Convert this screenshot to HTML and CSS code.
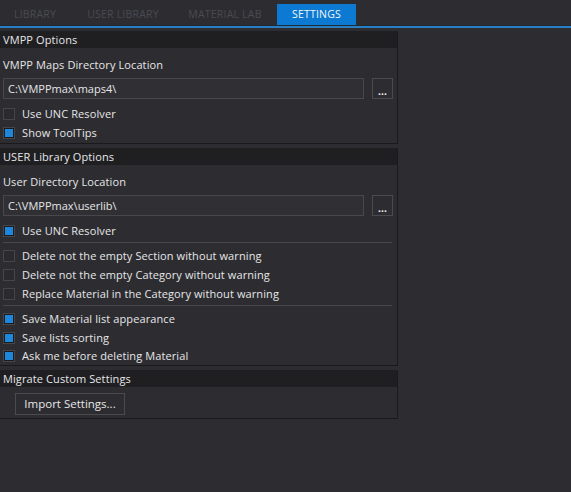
FILE: index.html
```html
<!DOCTYPE html>
<html>
<head>
<meta charset="utf-8">
<link rel="stylesheet" href="styles.css">
</head>
<body>
<div class="tabs">
  <div class="tab t1">LIBRARY</div>
  <div class="tab t2">USER LIBRARY</div>
  <div class="tab t3">MATERIAL LAB</div>
  <div class="tab active">SETTINGS</div>
</div>
<div class="tabline"></div>
<div class="panel">
  <div class="section s1">
    <div class="head">VMPP Options</div>
    <div class="label">VMPP Maps Directory Location</div>
    <div class="pathrow">
      <div class="input">C:\VMPPmax\maps4\</div>
      <div class="browse">...</div>
    </div>
    <div class="checks first">
      <div class="check"><span class="box"></span>Use UNC Resolver</div>
      <div class="check"><span class="box on"></span>Show ToolTips</div>
    </div>
  </div>
  <div class="section s2">
    <div class="head">USER Library Options</div>
    <div class="label">User Directory Location</div>
    <div class="pathrow">
      <div class="input">C:\VMPPmax\userlib\</div>
      <div class="browse">...</div>
    </div>
    <div class="checks first">
      <div class="check"><span class="box on"></span>Use UNC Resolver</div>
    </div>
    <div class="sep"></div>
    <div class="checks">
      <div class="check"><span class="box"></span>Delete not the empty Section without warning</div>
      <div class="check"><span class="box"></span>Delete not the empty Category without warning</div>
      <div class="check"><span class="box"></span>Replace Material in the Category without warning</div>
    </div>
    <div class="sep"></div>
    <div class="checks last">
      <div class="check"><span class="box on"></span>Save Material list appearance</div>
      <div class="check"><span class="box on"></span>Save lists sorting</div>
      <div class="check short"><span class="box on"></span>Ask me before deleting Material</div>
    </div>
  </div>
  <div class="section s3">
    <div class="head">Migrate Custom Settings</div>
    <div class="btnrow"><div class="button">Import Settings...</div></div>
  </div>
</div>
</body>
</html>
```

FILE: styles.css
```css
html, body {
  margin: 0;
  padding: 0;
  background: #2d2d31;
  height: 100%;
}
body {
  font-family: "Open Sans", "Noto Sans", sans-serif;
  font-size: 11px;
  letter-spacing: 0.1px;
  color: #e6e6e8;
}
.tabs {
  display: flex;
  height: 21px;
  padding-top: 4px;
}
.tab {
  font-size: 10.5px;
  line-height: 21px;
  color: #4a4a52;
  text-align: center;
  letter-spacing: 0.2px;
}
.t1 { width: 70px; }
.t2 { width: 106px; }
.t3 { width: 98px; margin-right: 3px; }
.tab.active {
  width: 79px;
  background: #0c79d2;
  color: #f2f6fa;
}
.tabline {
  height: 2px;
  background: #2a7ec2;
  border-top: 1px solid #1d2a36;
}
.panel {
  width: 398px;
  padding-top: 3px;
}
.section {
  border-right: 1px solid #1a1a1d;
  border-bottom: 1px solid #1a1a1d;
  margin-bottom: 4px;
}
.head {
  height: 17px;
  line-height: 17px;
  background: #1f1f22;
  padding-left: 3px;
}
.label {
  margin-top: 9px;
  height: 16px;
  line-height: 16px;
  padding-left: 3px;
}
.pathrow {
  display: flex;
  margin-top: 5px;
  padding: 0 4px 0 3px;
  gap: 8px;
}
.input {
  flex: 1;
  height: 19px;
  line-height: 19px;
  border: 1px solid #47474c;
  background: #303034;
  padding-left: 4px;
  letter-spacing: 0;
}
.browse {
  width: 19px;
  height: 19px;
  border: 1px solid #4a4a4f;
  text-align: center;
  font-weight: bold;
  font-size: 10px;
  line-height: 25px;
  overflow: hidden;
  color: #f5f5f5;
}
.checks {
  padding-left: 3px;
}
.checks.first {
  margin-top: 5px;
}
.s1 .checks.first {
  padding-bottom: 1px;
}
.check {
  display: flex;
  align-items: center;
  height: 19px;
  gap: 7px;
}
.check.short {
  height: 17px;
}
.box {
  box-sizing: border-box;
  width: 12px;
  height: 12px;
  border: 1px solid #45454a;
  background: #2b2b2f;
  flex: none;
}
.box.on {
  padding: 1px;
  background: #1b1b1e;
  background-clip: padding-box;
}
.box.on::after {
  content: "";
  display: block;
  width: 8px;
  height: 8px;
  background: #1d87dc;
}
.sep {
  height: 1px;
  background: #47474c;
  margin: 2px 5px 3px 3px;
}
.s2 .sep:first-of-type {
  margin-bottom: 4px;
}
.checks.last {
  padding-bottom: 1px;
}
.btnrow {
  padding: 6px 0 3px 15px;
}
.button {
  display: inline-block;
  box-sizing: border-box;
  height: 22px;
  line-height: 20px;
  width: 110px;
  text-align: center;
  border: 1px solid #4a4a4f;
  background: #2d2d31;
  font-size: 11.5px;
  letter-spacing: 0;
}
```
